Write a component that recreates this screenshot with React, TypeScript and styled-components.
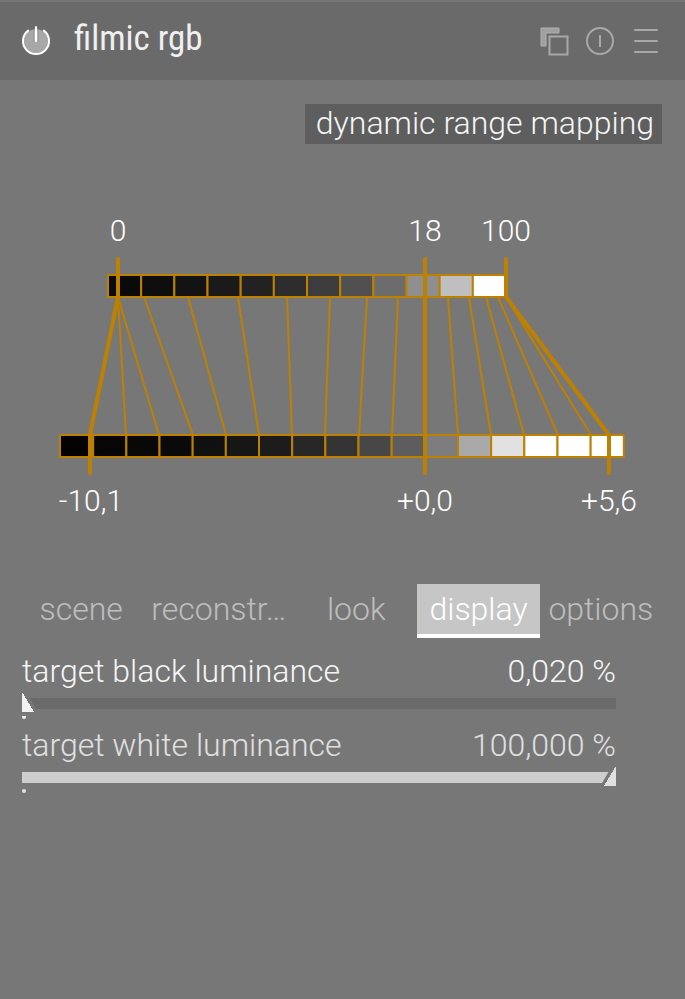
import React, { useId, useState } from "react";
import styled, { createGlobalStyle } from "styled-components";

const color = {
  panel: "#777777",
  header: "#6a6a6a",
  caption: "#5e5e5e",
  trough: "#6a6a6a",
  accent: "#be8000",
  icon: "#a8a8a8",
  tabText: "#bebebe",
  tabActive: "#c6c6c6",
};

const GlobalStyle = createGlobalStyle`
  *, *::before, *::after { box-sizing: border-box; }
  html, body { margin: 0; min-height: 100%; background: ${color.panel}; }
  body, button, input { font-family: Roboto, "Liberation Sans", sans-serif; font-weight: 300; }
`;

const Module = styled.main`
  padding-top: 2px;
  color: #f5f5f5;
  font-size: 32px;
  line-height: 40px;
`;

const Header = styled.header`
  display: flex;
  align-items: center;
  height: 78px;
  padding: 0 23px 0 20px;
  background: ${color.header};
`;

const Title = styled.h2`
  flex: 1;
  margin: 0 0 4px 22px;
  font-family: "Roboto Condensed", Roboto, sans-serif;
  font-size: 35px;
  font-weight: 400;
  color: #f0f0f0;
`;

const HeaderActions = styled.div`
  display: flex;
  gap: 14px;
`;

const IconButton = styled.button`
  display: block;
  width: 32px;
  height: 32px;
  padding: 0;
  border: 0;
  background: none;
  cursor: pointer;

  svg { display: block; }
`;

const CaptionRow = styled.div`
  display: flex;
  justify-content: flex-end;
  padding: 24px 23px 0;
`;

const Caption = styled.h3`
  margin: 0;
  padding: 0 8px 2px 11px;
  background: ${color.caption};
  font-size: 32px;
  font-weight: 300;
  line-height: 38px;
`;

const Chart = styled.svg`
  display: block;
  width: 100%;
  height: auto;
  margin-top: 56px;
`;

const Tile = styled.rect`
  stroke: ${color.accent};
  stroke-width: 2px;
`;

const MapLine = styled.polyline<{ $major?: boolean }>`
  fill: none;
  stroke: ${color.accent};
  stroke-width: ${(p) => (p.$major ? 4 : 2)}px;
  stroke-linecap: round;
  stroke-linejoin: round;
`;

const ChartLabel = styled.text`
  fill: #ffffff;
  font-size: 30px;
  text-anchor: middle;
`;

const TabBar = styled.div`
  display: grid;
  grid-template-columns: 4fr 5fr 4fr 4fr 4fr;
  margin: 64px 23px 0 20px;
`;

const Tab = styled.button<{ $active: boolean }>`
  height: 54px;
  padding: 0;
  border: 0;
  border-bottom: 4px solid ${(p) => (p.$active ? "#ffffff" : "transparent")};
  background: ${(p) => (p.$active ? color.tabActive : "none")};
  color: ${(p) => (p.$active ? "#ffffff" : color.tabText)};
  font-size: 32px;
  line-height: 40px;
  white-space: nowrap;
  cursor: pointer;
`;

const Sliders = styled.div`
  padding: 13px 69px 0 22px;
`;

const SliderField = styled.div<{ $focused?: boolean }>`
  height: 74px;
  color: ${(p) => (p.$focused ? "#f5f5f5" : "#e0e0e0")};
  --knob: ${(p) => (p.$focused ? "#f2f2f2" : "#e0e0e0")};
`;

const SliderText = styled.div`
  display: flex;
  justify-content: space-between;
`;

const Rail = styled.div`
  position: relative;
  height: 28px;
  margin-top: 1px;
  overflow: hidden;

  &::before {
    content: "";
    position: absolute;
    left: 0;
    bottom: 1px;
    width: 4px;
    height: 4px;
    border-radius: 50%;
    background: var(--knob);
  }
`;

const Range = styled.input`
  position: relative;
  display: block;
  width: calc(100% + 36px);
  height: 24px;
  margin: 0 -18px;
  appearance: none;
  outline: none;
  cursor: pointer;
  background: linear-gradient(
      to right,
      #cecece var(--fill),
      ${color.trough} var(--fill)
    )
    18px 6px / calc(100% - 36px) 11px no-repeat;

  &::-webkit-slider-thumb {
    appearance: none;
    width: 36px;
    height: 24px;
    clip-path: polygon(14px 0, 22px 0, 36px 100%, 0 100%);
    background:
      linear-gradient(${color.panel}, ${color.panel}) 0 20px / 100% 4px no-repeat,
      conic-gradient(from 149deg at 18px 0, var(--knob) 62deg, ${color.panel} 62deg);
  }
`;

const step = 199 / 6;

const displayTiles = [
  "#0a0a0a", "#0e0e0e", "#131313", "#1a1a1a", "#222222", "#2d2d2d",
  "#3c3c3c", "#505050", "#6c6c6c", "#8f8f8f", "#bfbfbf", "#ffffff",
];

const sceneTiles = [
  "#030303", "#060606", "#080808", "#0a0a0a", "#101010", "#161616",
  "#1c1c1c", "#272727", "#343434", "#474747", "#5d5d5d", "#7d7d7d",
  "#a9a9a9", "#e1e1e1", "#ffffff", "#ffffff", "#ffffff",
];

const minorLines: [number, number][] = [
  [118, 126], [118, 159], [144, 193], [188, 226], [238, 259],
  [287, 292], [330, 325], [367, 359], [398, 392], [448, 458],
  [469, 491], [486, 524], [498, 558], [506, 591],
];

const majorLines: [number, number][] = [[118, 90], [425, 425], [506, 609]];

function RangeChart() {
  return (
    <Chart viewBox="0 200 685 320" role="img" aria-label="dynamic range mapping">
      {displayTiles.map((fill, i) => (
        <Tile key={i} x={108 + i * step} y={275} width={step} height={22} fill={fill} />
      ))}
      {sceneTiles.map((fill, i) => (
        <Tile key={i} x={60 + i * step} y={435} width={step} height={22} fill={fill} />
      ))}
      {minorLines.map(([top, bottom]) => (
        <MapLine key={bottom} points={`${top},297 ${bottom},435`} />
      ))}
      {majorLines.map(([top, bottom]) => (
        <MapLine
          key={bottom}
          $major
          points={`${top},259 ${top},297 ${bottom},435 ${bottom},473`}
        />
      ))}
      <ChartLabel x={118} y={241}>0</ChartLabel>
      <ChartLabel x={425} y={241}>18</ChartLabel>
      <ChartLabel x={506} y={241}>100</ChartLabel>
      <ChartLabel x={91} y={511}>-10,1</ChartLabel>
      <ChartLabel x={425} y={511}>+0,0</ChartLabel>
      <ChartLabel x={609} y={511}>+5,6</ChartLabel>
    </Chart>
  );
}

function PowerIcon() {
  return (
    <svg width="32" height="32" viewBox="0 0 32 32" fill="none" strokeLinecap="round">
      <circle cx="16" cy="16" r="12" fill={color.icon} />
      <path d="M16 0v17" stroke={color.header} strokeWidth="5" strokeLinecap="butt" />
      <path d="M13.4 4.5h5.2v13h-5.2z" fill={color.icon} />
      <path d="M8.2 5.6a13 13 0 1 0 15.6 0" stroke="#ffffff" strokeWidth="2" />
      <path d="M16 2v14" stroke="#ffffff" strokeWidth="2.2" />
    </svg>
  );
}

function InstancesIcon() {
  return (
    <svg width="32" height="32" viewBox="0 0 32 32" fill="none" stroke={color.icon}>
      <path d="M3 3h18v5H8v13H3z" fill="#a0a0a0" stroke="#b0b0b0" />
      <rect x="11.5" y="11.5" width="18" height="18" strokeWidth="2" />
    </svg>
  );
}

function ResetIcon() {
  return (
    <svg width="32" height="32" viewBox="0 0 32 32" fill="none" stroke={color.icon} strokeWidth="2">
      <circle cx="16" cy="16" r="13" />
      <path d="M16 10v12" />
    </svg>
  );
}

function PresetsIcon() {
  return (
    <svg width="32" height="32" viewBox="0 0 32 32" stroke={color.icon} strokeWidth="2" strokeLinecap="round">
      <path d="M5 5h22M5 16h22M5 27h22" />
    </svg>
  );
}

type SliderProps = {
  label: string;
  initial: number;
  min: number;
  max: number;
  focused?: boolean;
};

function Slider({ label, initial, min, max, focused }: SliderProps) {
  const id = useId();
  const [value, setValue] = useState(initial);
  const fill = `${((value - min) / (max - min)) * 100}%`;
  return (
    <SliderField $focused={focused}>
      <SliderText>
        <label htmlFor={id}>{label}</label>
        <output htmlFor={id}>{value.toFixed(3).replace(".", ",")} %</output>
      </SliderText>
      <Rail>
        <Range
          id={id}
          type="range"
          min={min}
          max={max}
          step={0.001}
          value={value}
          onChange={(e) => setValue(Number(e.target.value))}
          style={{ "--fill": fill } as React.CSSProperties}
        />
      </Rail>
    </SliderField>
  );
}

const tabs = ["scene", "reconstr…", "look", "display", "options"];

export default function App() {
  const [active, setActive] = useState("display");
  return (
    <>
      <GlobalStyle />
      <Module>
        <Header>
          <IconButton aria-label="filmic rgb is switched on"><PowerIcon /></IconButton>
          <Title>filmic rgb</Title>
          <HeaderActions>
            <IconButton aria-label="multiple instance actions"><InstancesIcon /></IconButton>
            <IconButton aria-label="reset parameters"><ResetIcon /></IconButton>
            <IconButton aria-label="presets"><PresetsIcon /></IconButton>
          </HeaderActions>
        </Header>
        <CaptionRow>
          <Caption>dynamic range mapping</Caption>
        </CaptionRow>
        <RangeChart />
        <TabBar role="tablist">
          {tabs.map((name) => (
            <Tab
              key={name}
              role="tab"
              aria-selected={name === active}
              $active={name === active}
              onClick={() => setActive(name)}
            >
              {name}
            </Tab>
          ))}
        </TabBar>
        <Sliders>
          <Slider label="target black luminance" initial={0.02} min={0.02} max={20} focused />
          <Slider label="target white luminance" initial={100} min={0} max={100} />
        </Sliders>
      </Module>
    </>
  );
}
